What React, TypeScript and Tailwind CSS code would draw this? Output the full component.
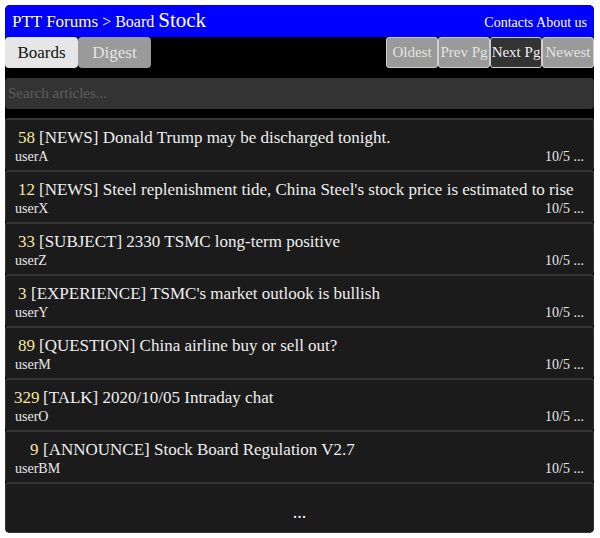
import React from "react";

const items = [
  { n: "58", pad: "w-[28px] pl-[12px]", title: "[NEWS] Donald Trump may be discharged tonight.", user: "userA" },
  { n: "12", pad: "w-[28px] pl-[12px]", title: "[NEWS] Steel replenishment tide, China Steel's stock price is estimated to rise", user: "userX" },
  { n: "33", pad: "w-[28px] pl-[12px]", title: "[SUBJECT] 2330 TSMC long-term positive", user: "userZ" },
  { n: "3", pad: "w-[20px] pl-[12px]", title: "[EXPERIENCE] TSMC's market outlook is bullish", user: "userY" },
  { n: "89", pad: "w-[28px] pl-[12px]", title: "[QUESTION] China airline buy or sell out?", user: "userM" },
  { n: "329", pad: "w-[32px] pl-[8px]", title: "[TALK] 2020/10/05 Intraday chat", user: "userO" },
  { n: "9", pad: "w-[32px] pl-[24px]", title: "[ANNOUNCE] Stock Board Regulation V2.7", user: "userBM" },
];

export default function App() {
  return (
    <div className="bg-white min-h-[538px] pt-[5px] px-[5px]" style={{ fontFamily: '"Liberation Serif", serif' }}>
      <div className="w-[589px] bg-black rounded-[5px] overflow-hidden flex flex-col">
        <div className="h-[32px] bg-[#0000ff] flex items-end justify-between px-[7px] pb-[6px]">
          <div className="flex items-baseline">
            <span className="text-[#ffff99] text-[17px] leading-none">PTT Forums</span>
            <span className="text-white text-[16px] leading-none ml-[4px]">&gt; Board</span>
            <span className="text-white text-[21px] leading-none ml-[4px]">Stock</span>
          </div>
          <div className="text-white text-[14px] leading-none pb-[1px]">Contacts About us</div>
        </div>
        <div className="flex justify-between h-[31px]">
          <div className="flex">
            <div className="w-[73px] h-[31px] bg-[#e6e6e6] text-[#111] text-[17px] flex items-center justify-center rounded-[4px]">Boards</div>
            <div className="w-[73px] h-[31px] bg-[#9a9a9a] text-[#e4e4e4] text-[17px] flex items-center justify-center rounded-[4px]">Digest</div>
          </div>
          <div className="flex">
            {[
              ["Oldest", false],
              ["Prev Pg", false],
              ["Next Pg", true],
              ["Newest", false],
            ].map(([l, a]) => (
              <div
                key={l as string}
                className={
                  a
                    ? "w-[52px] h-[31px] bg-[#333333] text-[#f0f0f0] text-[15px] flex items-center justify-center rounded-[3px] border border-[#cfcfcf] whitespace-nowrap"
                    : "w-[52px] h-[31px] bg-[#9a9a9a] text-[#e4e4e4] text-[15px] flex items-center justify-center rounded-[3px] border border-[#cfcfcf] whitespace-nowrap"
                }
              >
                {l as string}
              </div>
            ))}
          </div>
        </div>
        <div className="mt-[10px] h-[31px] bg-[#333333] rounded-[4px] flex items-center px-[3px]">
          <span className="text-[#5e5e5e] text-[15px]">Search articles...</span>
        </div>
        <div className="mt-[9px] flex flex-col">
          {items.map((it) => (
            <div key={it.user} className="h-[52px] bg-[#1b1b1b] border-t-2 border-x border-[#353535] rounded-[3px] flex flex-col">
              <div className="flex items-baseline mt-[8px] text-[17px] leading-[19px] text-[#eeeeee] whitespace-nowrap">
                <span className={"text-[#f5e6a0] shrink-0 " + it.pad}>{it.n}</span>
                <span className="ml-[5px]">{it.title}</span>
              </div>
              <div className="flex justify-between items-end px-[9px] text-[14px] leading-[16px] text-[#e8e8e8]">
                <span>{it.user}</span>
                <span className="pt-[2px]">10/5 ...</span>
              </div>
            </div>
          ))}
          <div className="h-[51px] bg-[#1b1b1b] border-t-2 border-x border-b border-[#353535] rounded-[3px] flex items-center justify-center text-[#eeeeee] text-[18px] pt-[8px]">
            ...
          </div>
        </div>
      </div>
    </div>
  );
}
